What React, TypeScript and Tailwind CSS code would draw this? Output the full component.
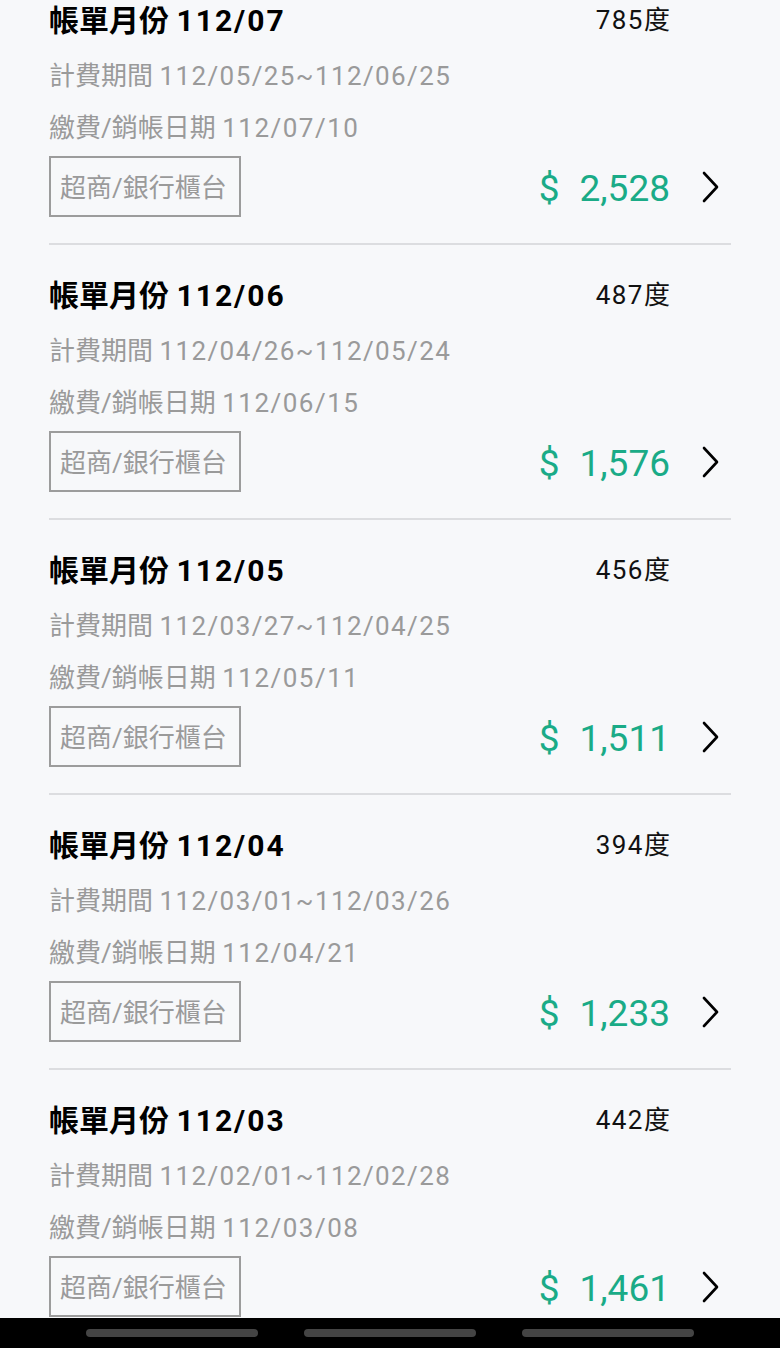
const bills = [
  { month: '112/07', usage: '785', period: '112/05/25~112/06/25', paid: '112/07/10', amount: '2,528' },
  { month: '112/06', usage: '487', period: '112/04/26~112/05/24', paid: '112/06/15', amount: '1,576' },
  { month: '112/05', usage: '456', period: '112/03/27~112/04/25', paid: '112/05/11', amount: '1,511' },
  { month: '112/04', usage: '394', period: '112/03/01~112/03/26', paid: '112/04/21', amount: '1,233' },
  { month: '112/03', usage: '442', period: '112/02/01~112/02/28', paid: '112/03/08', amount: '1,461' },
]

function Chevron() {
  return (
    <svg width="22" height="34" viewBox="0 0 22 34" fill="none" className="text-black">
      <path d="M4 3 L17 17 L4 31" stroke="currentColor" strokeWidth="2.6" strokeLinecap="round" strokeLinejoin="round" />
    </svg>
  )
}

function BillItem(props: { bill: (typeof bills)[number]; last?: boolean }) {
  const { bill } = props
  return (
    <div className={props.last ? '' : 'mb-[30px]'}>
      <div className="flex h-[40px] items-center pr-[61px]">
        <span className="flex-1 text-[30px] font-bold text-black">
          帳單月份 <span className="tracking-[2px]">{bill.month}</span>
        </span>
        <span className="text-[26px] text-[#111]">
          <span className="tracking-[1.5px]">{bill.usage}</span>度
        </span>
      </div>
      <div className="mt-[16px] flex h-[40px] items-center text-[26px] text-[#9a9a9a]">
        <span>
          計費期間 <span className="tracking-[1.4px]">{bill.period}</span>
        </span>
      </div>
      <div className="mt-[12px] flex h-[40px] items-center text-[26px] text-[#9a9a9a]">
        <span>
          繳費/銷帳日期 <span className="tracking-[1.5px]">{bill.paid}</span>
        </span>
      </div>
      <div className="mt-[8px] flex items-center">
        <div className="flex h-[61px] w-[192px] items-center border-2 border-[#9c9c9c] pl-[9px] pt-[4px] text-[26px] text-[#9a9a9a]">
          超商/銀行櫃台
        </div>
        <div className="ml-auto mt-[4px] flex items-center text-[37px] text-[#1aab87]">
          <span>$</span>
          <span className="ml-[20px]">{bill.amount}</span>
        </div>
        <div className="ml-[30px] mr-[9px] flex items-center">
          <Chevron />
        </div>
      </div>
      {!props.last && <div className="mt-[26px] h-[2px] bg-[#dcdde0]" />}
    </div>
  )
}

export default function App() {
  return (
    <div
      className="flex h-[1348px] w-[780px] flex-col overflow-hidden bg-[#f7f8fa]"
      style={{ fontFamily: 'Roboto, "Noto Sans CJK TC", sans-serif' }}
    >
      <main className="flex-1 overflow-hidden px-[49px]">
        {bills.map((b, i) => (
          <BillItem key={b.month} bill={b} last={i === bills.length - 1} />
        ))}
      </main>
      <div className="flex h-[30px] shrink-0 items-center justify-center gap-[46px] bg-black">
        <div className="h-[8px] w-[172px] rounded-full bg-[#444]" />
        <div className="h-[8px] w-[172px] rounded-full bg-[#444]" />
        <div className="h-[8px] w-[172px] rounded-full bg-[#444]" />
      </div>
    </div>
  )
}
